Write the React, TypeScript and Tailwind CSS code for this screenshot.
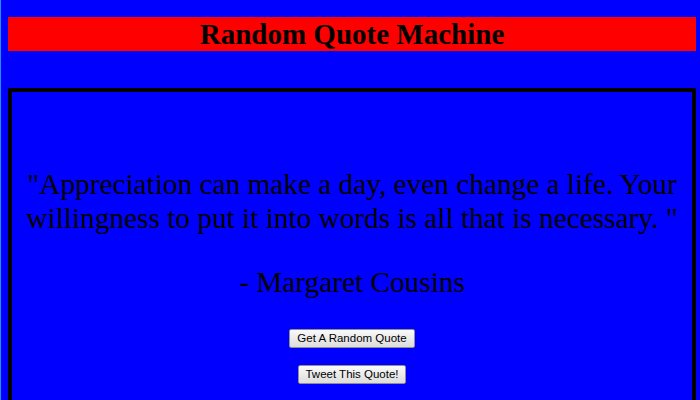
export default function App() {
  return (
    <div className="min-h-screen bg-[#0000ff] border-l border-[#1e90ff] pl-[7px] pr-[4px] pt-[17px] overflow-hidden">
      <div className="bg-[#ff0000] h-[34px] flex items-center justify-center">
        <h1 className="font-['Liberation_Serif',serif] font-bold text-[29px] leading-none text-black">
          Random Quote Machine
        </h1>
      </div>

      <div className="mt-[37px] border-4 border-black h-[400px] pt-[75px] px-[6px] text-center text-black font-['Liberation_Serif',serif]">
        <p className="text-[29.3px] leading-[34px]">
          "Appreciation can make a day, even change a life. Your willingness to put it into words is all that is necessary. "
        </p>
        <p className="text-[29.3px] leading-[34px] mt-[30px]">- Margaret Cousins</p>

        <div className="flex flex-col items-center mt-[30px] gap-[17px] font-['Liberation_Sans',sans-serif]">
          <button className="h-[19px] px-[7px] text-[11.5px] leading-none text-black bg-gradient-to-b from-[#fafafa] to-[#dcdcdc] border border-[#8f8f8f] rounded-[2px]">
            Get A Random Quote
          </button>
          <button className="h-[19px] px-[6px] text-[11.5px] leading-none text-black bg-gradient-to-b from-[#fafafa] to-[#dcdcdc] border border-[#8f8f8f] rounded-[2px]">
            Tweet This Quote!
          </button>
        </div>
      </div>
    </div>
  );
}
